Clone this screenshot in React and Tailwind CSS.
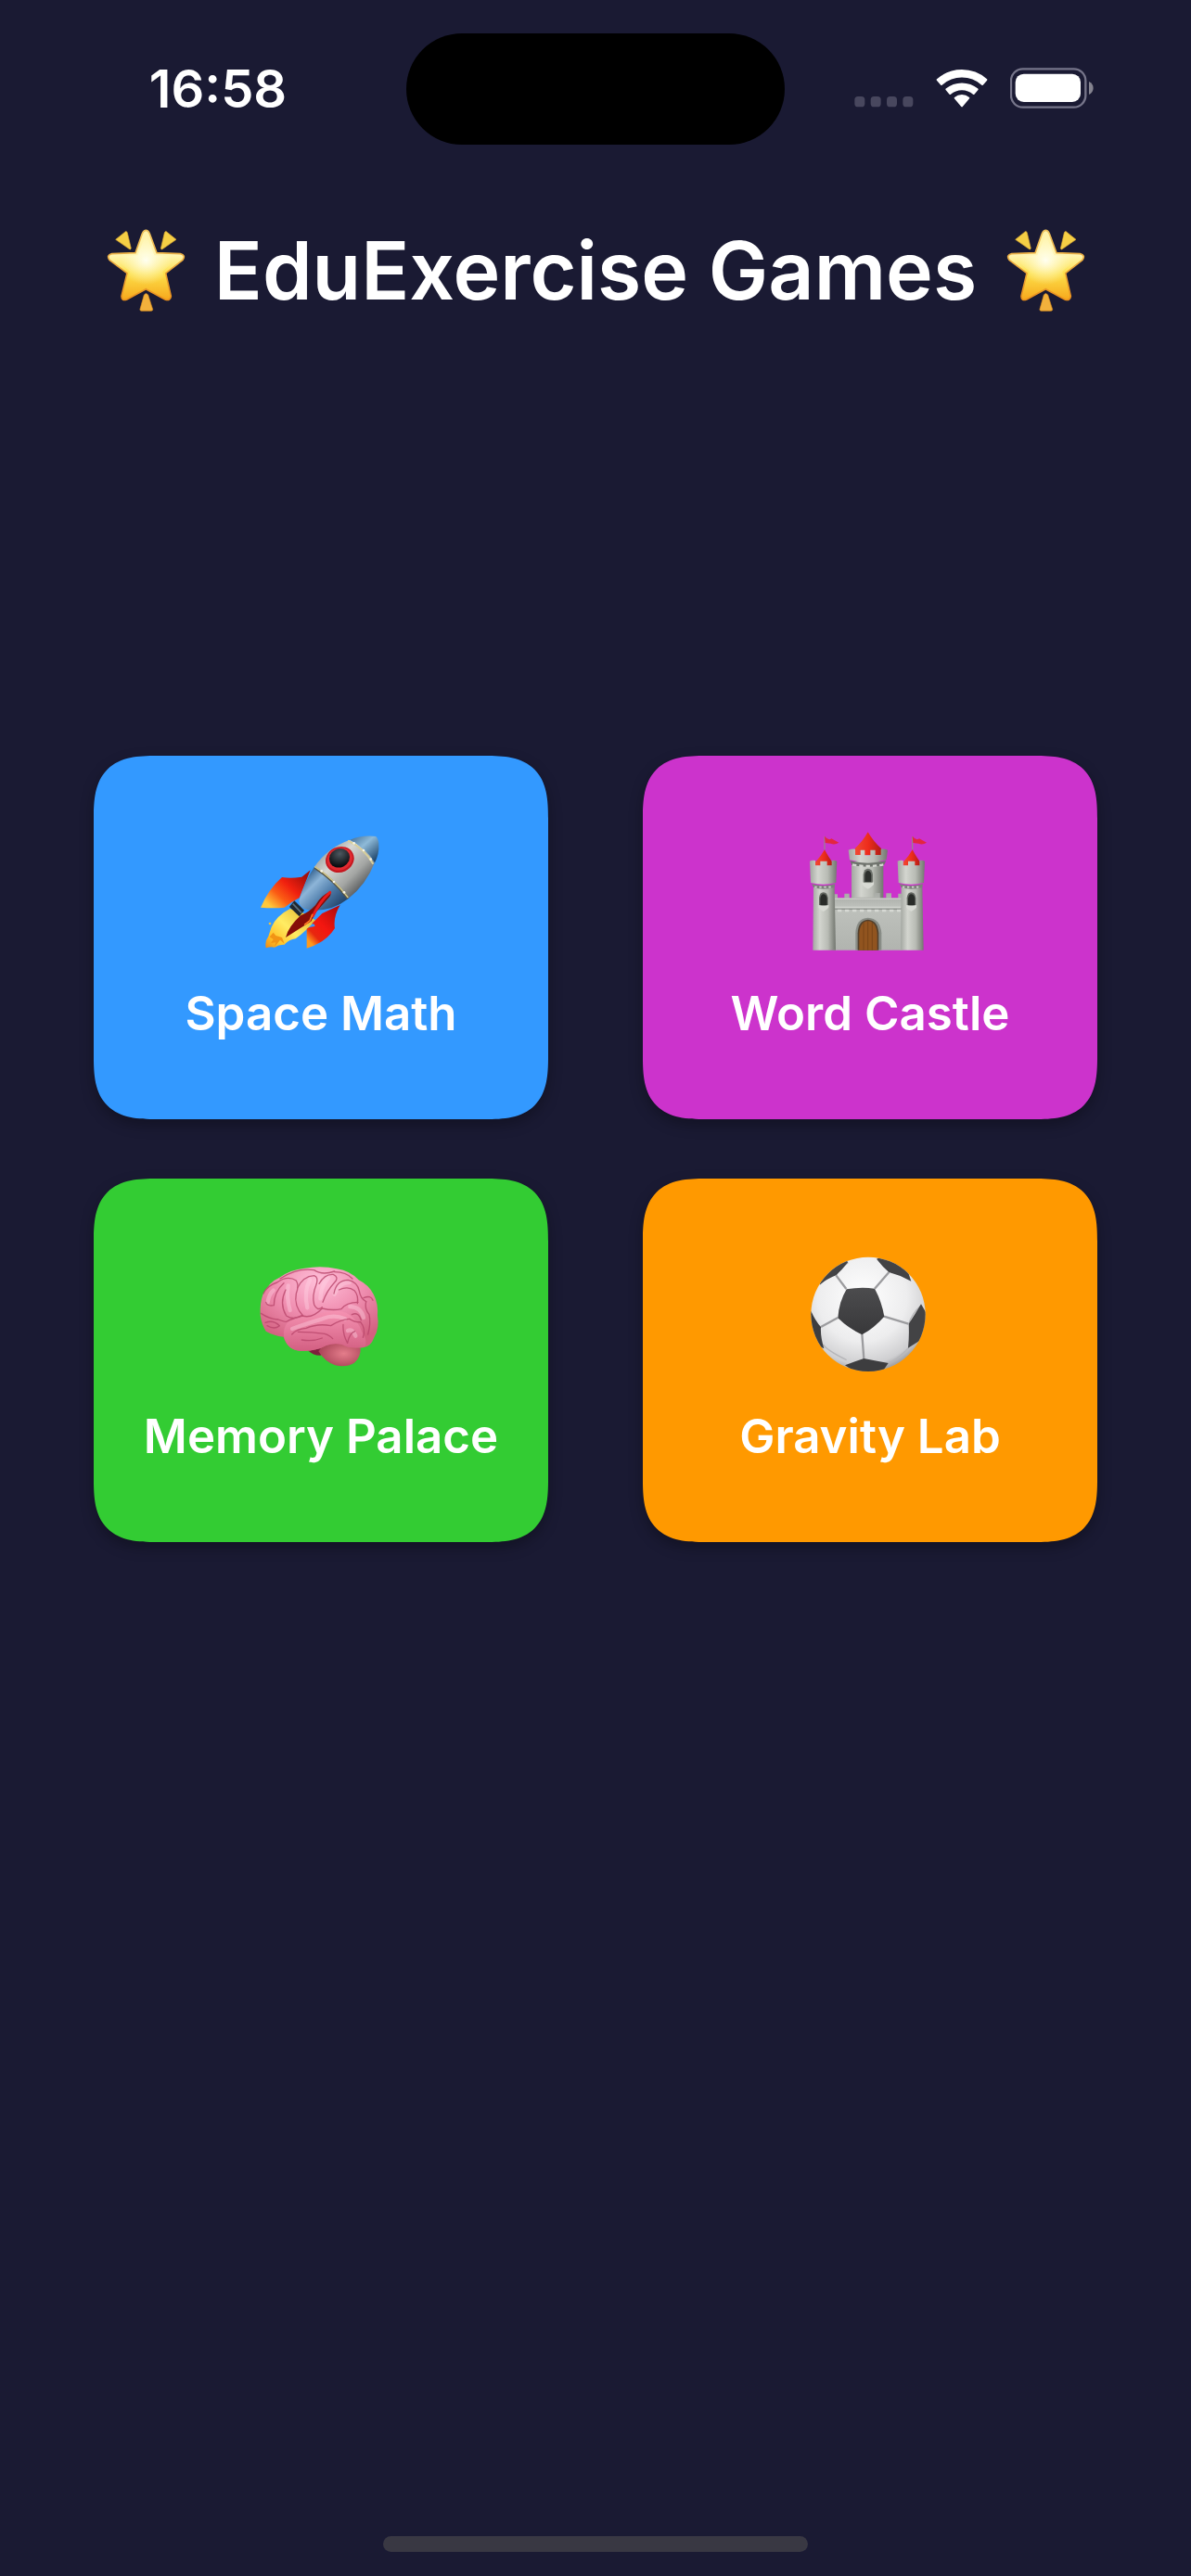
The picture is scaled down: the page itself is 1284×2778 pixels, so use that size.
import React from 'react';

const StarIcon = ({ id }) => (
  <svg className="size-[100px] shrink-0" viewBox="0 0 300 300" aria-hidden="true">
    <defs>
      <linearGradient id={`${id}-fill`} x1="0" y1="0" x2="0" y2="1">
        <stop offset="0" stopColor="#fff3a8" />
        <stop offset="0.35" stopColor="#fff6b4" />
        <stop offset="0.62" stopColor="#fde04a" />
        <stop offset="1" stopColor="#f6a81c" />
      </linearGradient>
      <linearGradient id={`${id}-edge`} x1="0" y1="0" x2="0" y2="1">
        <stop offset="0" stopColor="#eec25c" />
        <stop offset="1" stopColor="#e98f1c" />
      </linearGradient>
      <radialGradient id={`${id}-glow`} cx="0.5" cy="0.42" r="0.4">
        <stop offset="0" stopColor="#fffff0" />
        <stop offset="1" stopColor="#fffbd0" stopOpacity="0" />
      </radialGradient>
    </defs>
    <path
      d="M151 25Q158 25 163 36L186 98L262 101Q281 106 270 121L215 164L232 238Q230 255 213 249L151 215L89 249Q72 255 72 238L90 164L33 121Q22 106 41 101L117 98L139 36Q144 25 151 25Z"
      fill={`url(#${id}-fill)`}
      stroke={`url(#${id}-edge)`}
      strokeWidth="5"
      strokeLinejoin="round"
    />
    <path d="M151 38L178 106L258 110L205 158L222 238L151 200L82 238L99 158L44 110L124 106Z" fill={`url(#${id}-glow)`} />
    <path d="M53 55L85 29Q89 28 91 33L103 84Q101 89 96 85Z" fill="#f5cf45" stroke="#d9a530" strokeWidth="2" />
    <path d="M249 55L217 29Q213 28 211 33L199 84Q201 89 206 85Z" fill="#f5cf45" stroke="#d9a530" strokeWidth="2" />
    <path d="M145 234Q151 225 158 234L173 281Q173 286 167 286L136 286Q131 286 132 280Z" fill="#f2b13c" stroke="#dc8f20" strokeWidth="2" />
  </svg>
);

const RocketIcon = () => (
  <svg className="h-40 w-[170px]" viewBox="3 0 510 480" aria-hidden="true">
    <defs>
      <linearGradient id="rocket-body" x1="260" y1="100" x2="400" y2="240" gradientUnits="userSpaceOnUse">
        <stop offset="0" stopColor="#8e9494" />
        <stop offset="0.35" stopColor="#d6d7d3" />
        <stop offset="0.7" stopColor="#a3a5a3" />
        <stop offset="1" stopColor="#4c4f52" />
      </linearGradient>
      <linearGradient id="rocket-blue" x1="200" y1="210" x2="300" y2="310" gradientUnits="userSpaceOnUse">
        <stop offset="0" stopColor="#3f6c98" />
        <stop offset="0.25" stopColor="#8db5d8" />
        <stop offset="0.6" stopColor="#4f7dab" />
        <stop offset="1" stopColor="#24476e" />
      </linearGradient>
      <linearGradient id="rocket-nose" x1="375" y1="60" x2="445" y2="140" gradientUnits="userSpaceOnUse">
        <stop offset="0" stopColor="#4d789e" />
        <stop offset="0.4" stopColor="#8ebad8" />
        <stop offset="1" stopColor="#1c4268" />
      </linearGradient>
      <linearGradient id="rocket-fin-left" x1="200" y1="190" x2="100" y2="300" gradientUnits="userSpaceOnUse">
        <stop offset="0" stopColor="#a50f0a" />
        <stop offset="0.4" stopColor="#f0200f" />
        <stop offset="0.7" stopColor="#fb5c14" />
        <stop offset="1" stopColor="#ffc83a" />
      </linearGradient>
      <linearGradient id="rocket-fin-right" x1="310" y1="310" x2="212" y2="400" gradientUnits="userSpaceOnUse">
        <stop offset="0" stopColor="#b80d0c" />
        <stop offset="0.5" stopColor="#f41610" />
        <stop offset="0.8" stopColor="#e8270f" />
        <stop offset="1" stopColor="#ff9a1c" />
      </linearGradient>
      <linearGradient id="rocket-flame" x1="190" y1="310" x2="80" y2="430" gradientUnits="userSpaceOnUse">
        <stop offset="0" stopColor="#ecc43c" />
        <stop offset="0.4" stopColor="#ffec63" />
        <stop offset="0.75" stopColor="#ffc32a" />
        <stop offset="1" stopColor="#f08a12" />
      </linearGradient>
      <radialGradient id="rocket-glass" cx="0.6" cy="0.3" r="0.7">
        <stop offset="0" stopColor="#4d5860" />
        <stop offset="1" stopColor="#07090c" />
      </radialGradient>
    </defs>
    <path d="M158 303Q115 325 98 362Q92 380 88 392Q76 408 80 430Q96 425 108 428Q122 418 140 419Q152 404 176 400Q210 376 240 340L204 318Z" fill="url(#rocket-flame)" />
    <path d="M92 394L104 402L96 414L112 412L108 426L126 404L140 416L132 396L112 390L104 380Z" fill="#f29415" />
    <circle cx="93" cy="351" r="4" fill="#f0bd3a" />
    <path d="M224 178L196 200Q160 206 132 201Q88 240 63 299Q102 302 140 299Q160 282 188 268Z" fill="url(#rocket-fin-left)" />
    <path d="M320 291L262 318L228 352Q240 350 238 360Q218 362 212 368L212 431Q274 412 303 366Q297 330 320 291Z" fill="url(#rocket-fin-right)" />
    <path d="M237 167Q208 208 187 276Q188 302 216 307Q290 315 346 271Q300 208 237 167Z" fill="url(#rocket-blue)" />
    <path d="M237 167Q280 105 352 80Q404 105 432 153Q405 224 346 271Q300 208 237 167Z" fill="url(#rocket-body)" />
    <path d="M352 80Q392 64 436 69Q445 78 445 98Q447 124 432 154Q404 105 352 80Z" fill="url(#rocket-nose)" />
    <path d="M345 83Q397 106 427 158" fill="none" stroke="#d7cf9a" strokeWidth="6" />
    <path d="M238 170Q300 210 345 270" fill="none" stroke="#55544a" strokeWidth="8" />
    <path d="M238 167Q300 207 346 267" fill="none" stroke="#d8cd8c" strokeWidth="4" />
    <g fill="#f7f5e8">
      <circle cx="260" cy="181" r="4" />
      <circle cx="300" cy="216" r="4" />
      <circle cx="333" cy="250" r="4" />
      <circle cx="365" cy="91" r="4" />
      <circle cx="396" cy="114" r="4" />
      <circle cx="419" cy="143" r="4" />
    </g>
    <ellipse cx="319" cy="144" rx="47" ry="41" transform="rotate(-25 319 144)" fill="#c6161e" />
    <ellipse cx="319" cy="142" rx="42" ry="36" transform="rotate(-25 319 142)" fill="#e02a30" />
    <ellipse cx="318" cy="139" rx="34" ry="30" transform="rotate(-25 318 139)" fill="url(#rocket-glass)" />
    <path d="M172 277L204 308L188 328L156 297Z" fill="#20272e" />
    <path d="M167 287L195 316" stroke="#5c6f7c" strokeWidth="5" />
    <path d="M285 249Q294 252 286 264L242 314L226 344Q190 366 144 396Q152 362 192 325Q220 314 240 292Q258 260 285 249Z" fill="#860d08" />
    <path d="M287 250Q254 280 232 326" fill="none" stroke="#ea1b1b" strokeWidth="9" strokeLinecap="round" />
    <path d="M230 322L222 342L206 354" fill="none" stroke="#ff7b24" strokeWidth="5" strokeLinecap="round" />
  </svg>
);

const CastleIcon = () => (
  <svg className="h-40 w-[170px]" viewBox="8 0 510 480" aria-hidden="true">
    <defs>
      <linearGradient id="castle-stone" x1="0" y1="0" x2="1" y2="0">
        <stop offset="0" stopColor="#a3a7a1" />
        <stop offset="0.3" stopColor="#d3d5cf" />
        <stop offset="0.65" stopColor="#b9bcb5" />
        <stop offset="1" stopColor="#72766f" />
      </linearGradient>
      <linearGradient id="castle-wall" x1="0" y1="0" x2="0" y2="1">
        <stop offset="0" stopColor="#a8aba6" />
        <stop offset="0.25" stopColor="#bec1bc" />
        <stop offset="1" stopColor="#b1b4af" />
      </linearGradient>
      <linearGradient id="castle-roof" x1="0" y1="0" x2="1" y2="0">
        <stop offset="0" stopColor="#f04a34" />
        <stop offset="0.5" stopColor="#ee2c1c" />
        <stop offset="1" stopColor="#b01d14" />
      </linearGradient>
      <g id="castle-tower">
        <path d="M116 112V70" stroke="#9c7f92" strokeWidth="4" />
        <path d="M116 68Q128 84 138 76L162 89Q148 98 136 92L118 90Z" fill="#e32640" />
        <path d="M80 230H148L152 437H78Z" fill="url(#castle-stone)" />
        <path d="M116 112Q130 138 141 152V164H86V152Q104 134 116 112Z" fill="url(#castle-roof)" />
        <path d="M68 149Q76 144 86 147V163H102V149H124V163H139V147Q148 144 156 149L153 219Q112 230 71 219Z" fill="url(#castle-stone)" />
        <path d="M74 223Q112 234 150 223L148 234Q112 244 80 234Z" fill="#7d817b" />
        <path d="M84 233H144" stroke="#d5d7d1" strokeWidth="5" strokeDasharray="7 8" />
        <path d="M98 292V268Q100 250 112 250Q125 250 127 268V292Z" fill="#626660" />
        <path d="M102 292V270Q104 256 112 256Q122 256 124 270V292Z" fill="#292c29" />
        <path d="M96 291Q112 298 129 291V299Q122 307 112 312Q102 307 96 299Z" fill="#d8dad4" />
      </g>
    </defs>
    <path d="M203 150H306V280H203Z" fill="url(#castle-stone)" />
    <path d="M256 55Q274 86 299 108V130H214V108Q240 84 256 55Z" fill="url(#castle-roof)" />
    <path d="M193 113Q204 108 215 110V129H232V113H246V130H264V113H280V129H298V110Q310 108 320 113L316 145Q256 160 197 145Z" fill="url(#castle-stone)" />
    <path d="M198 148Q256 162 315 148L308 162Q256 172 204 162Z" fill="#6f736d" />
    <path d="M206 160Q256 170 306 160" fill="none" stroke="#d5d7d1" strokeWidth="7" strokeDasharray="13 9" />
    <path d="M241 218V192Q244 173 256 173Q269 173 272 192V218Z" fill="#6c706a" />
    <path d="M246 216V194Q248 180 256 180Q265 180 267 194V216Z" fill="#2d302d" />
    <path d="M237 217Q256 224 275 217V225Q266 235 256 239Q246 235 237 225Z" fill="#d8dad4" />
    <path d="M145 256H158V268H180V254H196V268H218V266H276V252H295V268H315V253H332V268H354V254H366V437H145Z" fill="url(#castle-wall)" />
    <path d="M146 271H364" stroke="#c9cbc6" strokeWidth="4" />
    <path d="M147 303H364" stroke="#7e827c" strokeWidth="5" />
    <path d="M149 299H362" stroke="#d2d4cf" strokeWidth="5" />
    <path d="M158 309H362" stroke="#d7d9d4" strokeWidth="7" strokeDasharray="13 11" />
    <path d="M216 437V382Q218 334 256 332Q296 334 300 382V437Z" fill="#888c86" />
    <path d="M223 437V382Q225 340 256 338Q288 340 291 382V437Z" fill="#53402d" />
    <path d="M228 437V384Q230 345 256 343Q283 345 286 384V437Z" fill="#91541f" />
    <path d="M242 348V437M256 343V437M270 347V437" stroke="#6d3d15" strokeWidth="2" />
    <use href="#castle-tower" />
    <use href="#castle-tower" x="284" />
  </svg>
);

const BrainIcon = () => (
  <svg className="h-40 w-[170px]" viewBox="3 -12 510 480" aria-hidden="true">
    <defs>
      <radialGradient id="brain-main" cx="0.5" cy="0.18" r="0.75">
        <stop offset="0" stopColor="#ffc0d9" />
        <stop offset="0.5" stopColor="#f08fb1" />
        <stop offset="1" stopColor="#d2607f" />
      </radialGradient>
      <linearGradient id="brain-lobe" x1="0" y1="0" x2="0" y2="1">
        <stop offset="0" stopColor="#f592b2" />
        <stop offset="1" stopColor="#d35f82" />
      </linearGradient>
      <radialGradient id="brain-stem" cx="0.6" cy="0.5" r="0.6">
        <stop offset="0" stopColor="#e47d8b" />
        <stop offset="1" stopColor="#a94357" />
      </radialGradient>
    </defs>
    <path d="M215 350Q230 368 256 368L300 336Z" fill="#7d1f3c" />
    <path d="M250 355Q262 330 300 322L386 344Q388 372 366 392Q340 408 304 400Q270 388 250 355Z" fill="url(#brain-stem)" />
    <path
      d="M62 238Q60 200 70 172Q90 130 124 116Q160 90 205 86Q260 76 310 88Q352 94 380 124Q412 140 428 170Q444 200 441 240Q448 280 430 310Q420 340 394 343Q360 346 330 334Q300 326 275 336Q240 356 190 353Q150 350 137 308Q104 304 80 290Q66 268 62 238Z"
      fill="url(#brain-main)"
    />
    <path
      d="M150 262Q190 242 232 243Q290 214 340 230Q376 250 390 290Q410 320 400 340Q356 350 325 332Q300 326 275 336Q240 356 190 353Q148 350 138 306Q136 278 150 262Z"
      fill="url(#brain-lobe)"
    />
    <g fill="none" stroke="#ffd3e4" strokeWidth="13" strokeLinecap="round" opacity="0.4">
      <path d="M152 142Q146 180 158 222" />
      <path d="M222 124Q202 160 214 214" />
      <path d="M282 118Q258 144 256 184" />
      <path d="M302 170Q318 130 350 132" />
      <path d="M165 282Q220 262 262 250Q300 234 336 250" />
      <path d="M86 196Q90 170 104 158" />
      <path d="M352 210Q388 212 396 246" />
      <path d="M345 288Q360 280 370 305" />
    </g>
    <g fill="none" stroke="#b9466b" strokeWidth="4" strokeLinecap="round" strokeLinejoin="round" opacity="0.8">
      <path d="M72 168Q84 142 116 132Q150 108 178 126Q188 142 178 168Q170 208 200 240" />
      <path d="M138 134Q106 162 106 206Q84 210 80 196" />
      <path d="M144 156Q122 200 146 240Q170 256 198 238" />
      <path d="M182 150Q200 112 236 110Q250 114 244 136Q228 176 236 204Q246 226 262 212" />
      <path d="M252 136Q270 104 298 106Q318 116 302 132Q276 160 264 196" />
      <path d="M198 240Q230 250 262 216Q296 224 324 218Q340 196 378 196" />
      <path d="M300 168Q308 124 346 124Q376 130 382 160Q386 184 404 194" />
      <path d="M316 156Q346 142 366 158Q380 174 376 200" />
      <path d="M126 120Q180 84 236 92Q262 110 302 96" />
      <path d="M302 98Q340 98 360 120" />
      <path d="M64 232Q90 250 120 252Q146 262 148 258Q160 250 198 240" />
      <path d="M78 262Q104 252 124 272Q108 286 84 272" />
      <path d="M164 300Q180 282 210 280Q248 264 290 272Q320 252 350 250" />
      <path d="M184 292Q230 292 270 298Q288 304 296 314" />
      <path d="M196 318Q232 324 262 312" />
      <path d="M350 250Q370 262 386 260Q404 282 394 310" />
      <path d="M330 268Q328 300 344 328Q350 296 368 290" />
      <path d="M358 236Q380 226 388 254" />
      <path d="M404 194Q398 216 414 236Q420 264 410 300" />
      <path d="M396 182Q420 172 426 190" />
    </g>
  </svg>
);

const SoccerIcon = () => (
  <svg className="h-40 w-[170px]" viewBox="8 -12 510 480" aria-hidden="true">
    <defs>
      <radialGradient id="ball-white" cx="0.45" cy="0.35" r="0.65">
        <stop offset="0" stopColor="#ffffff" />
        <stop offset="0.6" stopColor="#ededee" />
        <stop offset="0.9" stopColor="#cfcfd1" />
        <stop offset="1" stopColor="#a3a3a6" />
      </radialGradient>
      <linearGradient id="ball-dark" x1="0" y1="0" x2="0" y2="1">
        <stop offset="0" stopColor="#4c4c4e" />
        <stop offset="1" stopColor="#38383a" />
      </linearGradient>
      <clipPath id="ball-clip">
        <circle cx="257" cy="235" r="185" />
      </clipPath>
    </defs>
    <circle cx="257" cy="235" r="185" fill="url(#ball-white)" />
    <g clipPath="url(#ball-clip)">
      <path d="M186 153L153 109M278 152L324 99M308 242L387 266M237 299L243 380M159 246L104 276" stroke="#9c9c9f" strokeWidth="7" />
      <path d="M187 383Q120 350 111 332M153 109Q160 90 192 68M395 334Q360 378 318 394M388 266Q400 230 428 206" fill="none" stroke="#b6b6b9" strokeWidth="4" />
      <path d="M187 154Q232 146 278 152Q300 192 309 242Q278 278 237 301Q192 280 159 247Q162 196 187 154Z" fill="url(#ball-dark)" />
      <path d="M192 66Q172 92 153 109Q124 120 100 140L110 90L170 50Z" fill="#434345" />
      <path d="M284 56Q304 82 324 99Q360 108 396 128L380 80L320 40Z" fill="#434345" />
      <path d="M72 224Q86 256 104 276Q102 306 114 346L80 330L60 260Z" fill="#3d3d3f" />
      <path d="M428 202Q408 236 388 266Q390 306 386 344L440 310L450 240Z" fill="#434345" />
      <path d="M182 400Q212 388 243 378Q284 386 322 393L300 425L220 425Z" fill="#3d3d3f" />
    </g>
  </svg>
);

const games = [
  { id: 1, title: 'Space Math', color: 'bg-[#3399ff]', Icon: RocketIcon },
  { id: 2, title: 'Word Castle', color: 'bg-[#cc33cc]', Icon: CastleIcon },
  { id: 3, title: 'Memory Palace', color: 'bg-[#33cc33]', Icon: BrainIcon },
  { id: 4, title: 'Gravity Lab', color: 'bg-[#ff9900]', Icon: SoccerIcon },
];

const StatusBar = () => (
  <header className="grid grid-cols-[1fr_408px_1fr] items-center pt-9">
    <time className="pl-8 text-center text-[56px] leading-[64px] font-semibold">16:58</time>
    <div className="h-[120px] rounded-full bg-black"></div>
    <div className="flex items-center justify-end gap-6 pr-[105px]">
      {/* Cellular */}
      <svg className="h-[46px] w-16" viewBox="243 99 192 138" fill="#48475e" aria-hidden="true">
        <rect x="244" y="192" width="33" height="34" rx="11" />
        <rect x="296" y="192" width="33" height="34" rx="11" />
        <rect x="348" y="192" width="33" height="34" rx="11" />
        <rect x="400" y="192" width="33" height="34" rx="11" />
      </svg>
      {/* Wifi */}
      <svg className="h-[46px] w-14" viewBox="504 99 168 138" fill="#fff" stroke="#fff" strokeWidth="6" strokeLinejoin="round" aria-hidden="true">
        <path d="M509 138A120 120 0 0 1 667 138L654 153A99 99 0 0 0 522 153Z" />
        <path d="M538 169A79 79 0 0 1 638 169L626 183A57 57 0 0 0 550 183Z" />
        <path d="M566 197A34 34 0 0 1 610 197L588 223Z" />
      </svg>
      {/* Battery */}
      <svg className="h-[46px] w-[90px]" viewBox="744 99 270 138" aria-hidden="true">
        <rect x="747" y="103" width="241" height="124" rx="38" fill="none" stroke="#76758a" strokeWidth="7" />
        <rect x="761" y="119" width="211" height="91" rx="27" fill="#fff" />
        <path d="M999 144Q1013 151 1013 165Q1013 179 999 186Z" fill="#84838f" />
      </svg>
    </div>
  </header>
);

const GameCard = ({ title, color, Icon }) => (
  <button
    type="button"
    className={`flex cursor-pointer flex-col items-center rounded-[68px] pt-16 pb-[82px] shadow-[0_6px_15px_rgba(0,0,0,0.3)] [corner-shape:superellipse(1.5)] ${color}`}
  >
    <Icon />
    <span className="mt-[22px] text-[51px] leading-[64px] font-semibold whitespace-nowrap">{title}</span>
  </button>
);

const App = () => {
  return (
    <div className="flex min-h-screen flex-col bg-[#1a1a33] font-['Inter',sans-serif] text-white">
      <StatusBar />

      <main className="flex flex-1 flex-col">
        <div className="mt-[84px] flex items-center justify-center gap-6">
          <StarIcon id="star-left" />
          <h1 className="mt-1 text-[86px] leading-[96px] font-semibold whitespace-nowrap">EduExercise Games</h1>
          <StarIcon id="star-right" />
        </div>

        {/* Game List */}
        <div className="mt-[475px] grid grid-cols-2 gap-x-[102px] gap-y-16 px-[101px]">
          {games.map((game) => (
            <GameCard key={game.id} {...game} />
          ))}
        </div>
      </main>

      <div className="mx-auto mb-[26px] h-[17px] w-[458px] rounded-full bg-[#393843]"></div>
    </div>
  );
};

export default App;
